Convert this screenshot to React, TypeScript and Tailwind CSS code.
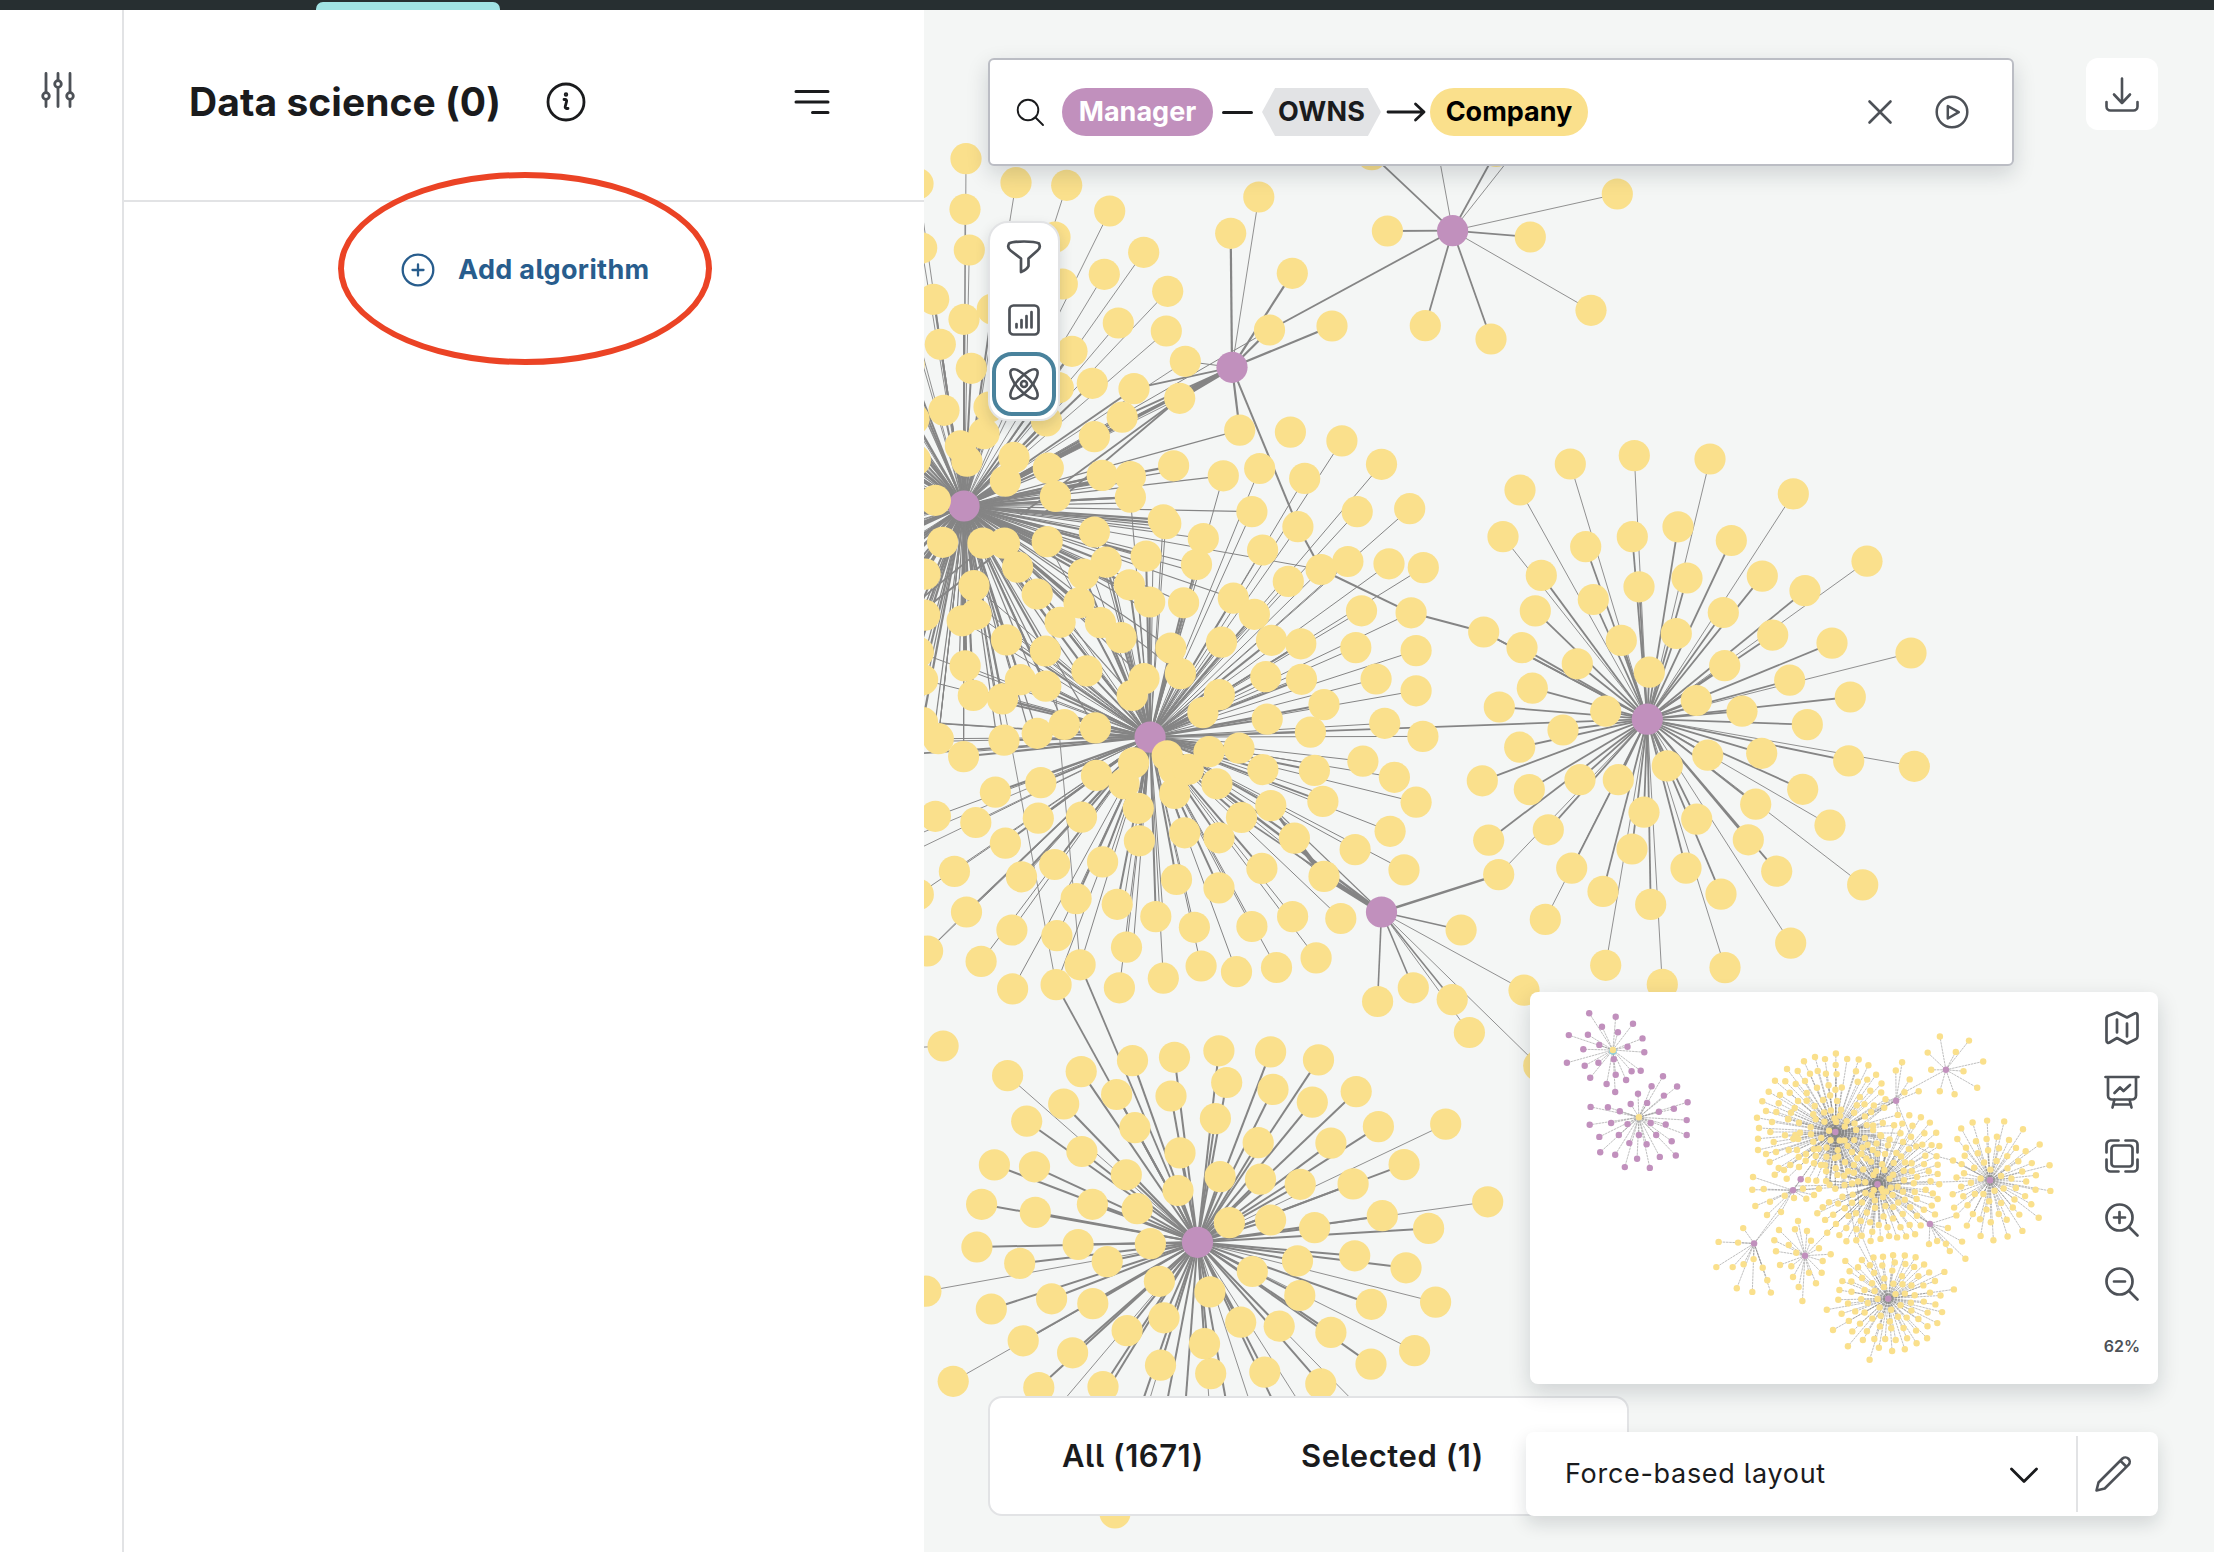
import React from "react";

type Pt = [number, number];
type Patch = { x: number; y: number; sx: number; sy: number; pts: number[] };

const NODE = "#fae08c";
const HUB = "#c190bd";

/* Minimap projection: world -> page pixels. */
const MINI = { k: 0.2262, wx: 1150, wy: 737, mx: 1877.5, my: 1184.3 };

/* Turns a flat list of patch units into points. */
function unpack(p: Patch): Pt[] {
  const out: Pt[] = [];
  for (let i = 0; i < p.pts.length; i += 2) {
    out.push([p.x + p.pts[i] / p.sx, p.y + p.pts[i + 1] / p.sy]);
  }
  return out;
}
const toWorld = ([x, y]: Pt): Pt => [
  MINI.wx + (x - MINI.mx) / MINI.k,
  MINI.wy + (y - MINI.my) / MINI.k,
];
const patchF = (pts: number[]) => unpack({ x: 1750, y: 1050, sx: 3, sy: 3, pts }).map(toWorld);
const patchE = (pts: number[]) => unpack({ x: 1500, y: 980, sx: 2.1961, sy: 2.7413, pts }).map(toWorld);
const patchA1 = (pts: number[]) => unpack({ x: 924, y: 140, sx: 3, sy: 3, pts });
const patchA = (pts: number[]) => unpack({ x: 924, y: 0, sx: 2.24, sy: 3, pts });
const patchB = (pts: number[]) => unpack({ x: 924, y: 400, sx: 2.8, sy: 2.6133, pts });
const patchC = (pts: number[]) => unpack({ x: 1440, y: 420, sx: 3, sy: 2.6133, pts });
const patchD = (pts: number[]) => unpack({ x: 924, y: 980, sx: 2.5705, sy: 2.7413, pts });

const hA = patchB([112, 277])[0];
const hB = patchB([633, 881])[0];
const hC = patchC([622, 782])[0];
const hD = patchD([703, 719])[0];
const hT1 = patchA([690, 1102])[0];
const hT2 = patchA([1184, 692])[0];
const hR = patchB([1281, 1338])[0];
const [hL1, hL2, hL4] = patchF([129, 421, 152, 388, 165, 617]);
const hL3 = patchE([558, 722])[0];
const [hP1, hP2] = patchE([248, 192, 305, 376]);

const nodesTop = [
  ...patchA1([
    126, 56, 123, 208, 136, 330, 120, 538, 142, 685, 276, 128, 428, 136, 557, 213, 393, 291, 415, 432, 205, 507,
    659, 337, 541, 403, 731, 454, 583, 549, 727, 573, 444, 634, 403, 743, 505, 730, 630, 746, 784, 664, 767, 775,
    -18, 131, -7, 324, 29, 478, 49, 613, 60, 811, 195, 801,
  ]),
  ...patchF([
    195, 21, 162, 34, 111, 57, 143, 63, 203, 63, 180, 71, 75, 92, 106, 94, 137, 102, 165, 93, 201, 113, 56, 125,
    90, 135, 119, 128, 170, 129, 37, 154, 86, 160, 144, 153, 170, 152, 48, 183, 79, 186, 123, 188, 134, 174, 21, 203,
    66, 216, 114, 207, 147, 218, 27, 234, 61, 246, 105, 256, 150, 248, 183, 253, 24, 266, 71, 276, 130, 266, 145, 267,
    24, 300, 48, 312, 78, 306, 116, 300, 141, 300, 59, 336, 168, 312, 146, 321, 115, 208, 86, 354, 74, 374, 102, 360,
    121, 345, 147, 351, 110, 386, 167, 332, 192, 340, 174, 390, 199, 392, 213, 345, 219, 150, 194, 168, 190, 193,
    197, 208, 214, 264, 190, 275, 192, 298, 206, 296, 197, 318, 182, 232, 136, 255,
  ]),
];

const nodesMid = patchB([
  343, 55, 168, 88, 477, 96, 555, 45, 102, 120, 120, 160, 252, 150, 228, 212, -24, 157, -28, 50, 348, 178, 32, 262,
  368, 252, 499, 197, 578, 200, 578, 254, 699, 172, 838, 198, 884, 79, 1026, 84, 1170, 107, 1281, 168, 940, 179,
  1066, 205, 1360, 284, 1213, 292, 918, 292, 1047, 331, 670, 313, 677, 323, 782, 362, 763, 430, 948, 392, 1112, 443,
  1187, 422, 1302, 428, 1398, 438, 1020, 474, 477, 345, 345, 370, 622, 408, 510, 424, 447, 455, 52, 372, 165, 374,
  225, 374, 262, 437, 3, 455, 140, 485, 317, 507, 575, 483, 632, 528, 727, 530, 866, 518, 925, 560, 1225, 551,
  1364, 556, 434, 530, 381, 581, 494, 582, 552, 621, 2, 562, 146, 560, 107, 577, 231, 627, 340, 656, -16, 659,
  691, 648, 833, 633, 973, 628, 1055, 637, 1209, 647, 1378, 655, 115, 695, 456, 708, 616, 728, 718, 715, 957, 723,
  1057, 730, 1266, 729, 1378, 760, -4, 731, 270, 731, 341, 748, 138, 772, 220, 781, 583, 772, 827, 770, 781, 817,
  1120, 796, -4, 843, 40, 885, 393, 848, 480, 857, 317, 871, 224, 889, 961, 834, 1082, 868, 1290, 845, 1397, 879,
  111, 932, 587, 948, 681, 930, 798, 919, 882, 910, 949, 966, 1093, 968, 1229, 944, 1317, 986, 1378, 1051, 483, 981,
  560, 1003, 700, 965, 740, 965, 702, 1028, 820, 1003, 327, 1000, 200, 1025, 32, 1088, 145, 1104, 320, 1093,
  441, 1090, 600, 1067, 603, 1152, 730, 1131, 826, 1144, 889, 1091, 971, 1060, 1117, 1049, 1305, 1127, 1207, 1175,
  1344, 1228, 1037, 1145, 1120, 1245, 228, 1158, 85, 1232, 273, 1246, 366, 1214, 500, 1207, 426, 1303, 541, 1318,
  707, 1253, 826, 1275, 946, 1224, 1167, 1355, 1032, 1350, 918, 1376, 757, 1378, 649, 1350, -16, 1292, 119, 1338,
  10, 1440, 246, 1385, 160, 1467, 372, 1400, 437, 1476, 567, 1430, 670, 1511, 776, 1479, 875, 1494, 987, 1483,
  1098, 1458, 248, 1539, 370, 1528, 547, 1536,
]);

const nodesRight = patchC([
  391, 115, 583, 93, 810, 102, 240, 183, 1060, 193, 189, 305, 437, 331, 577, 305, 714, 279, 874, 315, 1281, 369,
  967, 408, 1095, 446, 304, 406, 460, 469, 597, 436, 741, 413, 850, 503, 998, 562, 286, 499, 131, 554, 246, 595,
  412, 637, 544, 576, 709, 558, 628, 659, 854, 642, 1176, 583, 1413, 609, 1049, 680, 1231, 724, 906, 761, 769, 733,
  277, 701, 178, 750, 497, 761, 369, 810, 1102, 796, 239, 855, 127, 943, 268, 966, 420, 940, 535, 940, 682, 904,
  803, 876, 965, 871, 1226, 891, 1423, 905, 1088, 965, 1170, 1059, 947, 1004, 925, 1097, 1010, 1179, 770, 1043,
  612, 1025, 325, 1071, 146, 1098, 176, 1188, 576, 1121, 395, 1171, 316, 1305, 489, 1232, 632, 1266, 738, 1171,
  843, 1239, 1268, 1215, 1052, 1367, 855, 1431, 667, 1475, 497, 1425,
]);

const nodesBottom = [
  ...patchD([
    215, 262, 404, 251, 536, 221, 644, 212, 758, 194, 891, 197, 1014, 219, 1111, 306, 359, 340, 495, 314, 635, 318,
    778, 281, 897, 300, 998, 335, 264, 387, 542, 405, 749, 380, 859, 446, 1168, 402, 1341, 395, 1046, 447, 406, 470,
    658, 474, 181, 507, 284, 512, 520, 534, 761, 539, 865, 546, 967, 560, 1234, 506, 1103, 559, 653, 577, 148, 615,
    433, 615, 286, 637, 548, 627, 785, 665, 891, 658, 1004, 679, 1178, 646, 1449, 608, 1297, 681, 136, 732, 396, 725,
    582, 723, 246, 777, 471, 772, 960, 770, 1107, 756, 1239, 789, 844, 799, 605, 826, 735, 855, 5, 853, 173, 902,
    328, 874, 434, 887, 966, 865, 1150, 889, 1315, 883, 617, 926, 814, 938, 913, 949, 1046, 966, 522, 961, 255, 989,
    382, 1022, 721, 997, 1261, 1016, 1149, 1053, 608, 1056, 737, 1079, 876, 1075, 1020, 1107, 75, 1100, 295, 1117,
    460, 1115, 491, 1461,
  ]),
  ...patchE([938, 982, 915, 996, 889, 1012, 861, 1017, 832, 1008, 822, 984, 797, 987, 764, 1004, 846, 984, 869, 987, 894, 982]),
];

const nodesT1 = patchA([687, 700, 750, 591, 825, 820, 774, 990, 914, 978]);
const nodesT2 = [
  ...patchA([1003, 464, 1038, 693, 1358, 711, 1553, 582, 1123, 977, 1270, 1017, 1494, 931]),
  ...patchE([966, 155, 1030, 166, 1001, 197]),
];
const nodesR = [
  ...patchB([1504, 1385, 1370, 1536, 1270, 1572, 1479, 1567]),
  ...patchD([1402, 144, 1580, 235]),
  ...patchC([252, 1490]),
];
const nodesL1 = patchF([
  9, 381, 7, 419, 41, 417, 16, 468, 60, 455, 51, 495, 104, 437, 132, 444, 93, 486, 159, 416, 169, 446, 192, 435, 207, 416,
]);
const nodesL3 = patchE([
  534, 680, 480, 718, 523, 720, 475, 787, 511, 787, 535, 779, 557, 765, 577, 789, 587, 823, 520, 845, 554, 855, 595, 857,
]);
const nodesL4 = [
  ...patchF([
    144, 513, 87, 540, 135, 538, 171, 543, 73, 571, 78, 604, 116, 585, 139, 608, 183, 572, 207, 595, 218, 633, 90, 645,
    124, 649, 129, 681, 177, 668, 215, 668, 198, 700, 146, 711,
  ]),
  ...patchE([664, 880]),
  ...patchD([49, 181]),
];
const nodesFarB = patchF([218, 472, 202, 490]);

const managersP1 = patchE([
  196, 91, 254, 101, 292, 120, 224, 128, 259, 143, 313, 160, 151, 151, 193, 150, 218, 178, 280, 183, 183, 190,
  317, 198, 147, 227, 216, 227, 186, 235, 250, 217, 198, 268, 254, 260, 289, 250, 309, 249, 277, 274, 234, 285, 253, 307,
]);
const managersP2 = patchE([
  358, 264, 333, 291, 389, 292, 303, 312, 360, 317, 412, 335, 323, 337, 287, 340, 199, 348, 237, 349, 263, 360,
  349, 361, 382, 353, 410, 384, 197, 397, 244, 392, 280, 395, 331, 392, 364, 396, 218, 430, 261, 425, 305, 425,
  343, 425, 410, 425, 284, 447, 322, 450, 377, 442, 220, 472, 253, 479, 301, 490, 351, 485, 386, 481, 274, 513, 329, 515,
]);

type Edge = { a: Pt; b: Pt; w: number };
const dist = (a: Pt, b: Pt) => Math.hypot(a[0] - b[0], a[1] - b[1]);
const star = (hub: Pt, nodes: Pt[], inner: number, w: number): Edge[] =>
  nodes.map((n) => ({ a: hub, b: n, w: dist(hub, n) < inner ? w : 0.9 }));

const midEdges: Edge[] = nodesMid.flatMap((n, i) => {
  const da = dist(n, hA);
  const db = dist(n, hB);
  const out: Edge[] = [];
  if (db < da || n[1] > 760 || db < 250) {
    out.push({ a: hB, b: n, w: db < 190 ? 2 : 1 });
    if (db < 215 && i % 2 === 0) out.push({ a: hB, b: [n[0] + 7, n[1] - 5], w: 1 });
  }
  if (da < 290 && (da < db || n[1] < 760)) {
    out.push({ a: hA, b: n, w: da < 230 ? 2.2 : 1.2 });
    if (da < 240) out.push({ a: hA, b: [n[0] - 6, n[1] + 6], w: 1.2 });
  }
  return out;
});

const link = (a: Pt, b: Pt, w: number): Edge => ({ a, b, w });
const [b884, b1047, b1112, b1364, b437, b370, b40, b10, b1120, b1037, b971, b889, b838, b111] = patchB([
  884, 79, 1047, 331, 1112, 443, 1364, 556, 437, 1476, 370, 1528, 40, 885, 10, 1440, 1120, 1245, 1037, 1145, 971, 1060,
  889, 1091, 838, 198, 111, 932,
]);
const [a784, a767, a630] = patchA1([784, 664, 767, 775, 630, 746]);
const [b555, b477, b499, b578] = patchB([555, 45, 477, 96, 499, 197, 578, 254]);
const [c131, c176] = patchC([131, 554, 176, 1188]);
const [b45, b119, b240] = patchB([45, 845, 119, 1338, 240, 880]);

const links: Edge[] = [
  link(hT2, nodesT1[3], 1.8),
  link(nodesT1[3], hA, 1),
  link(hT1, b884, 2.2),
  link(hT1, b1047, 2),
  link(b1047, b1112, 2),
  link(b1112, b1364, 2),
  link(b1364, c131, 2),
  link(c131, hC, 1.7),
  link(b1112, hA, 1),
  link(hT1, hA, 3.2),
  link(hT1, a784, 1),
  link(hT1, a767, 4),
  link(hT1, a630, 1.8),
  link(hT1, b555, 2),
  link(hT1, b477, 1.2),
  link(a767, patchB([330, 300])[0], 1.8),
  link(a767, patchB([270, 300])[0], 1.8),
  link(hA, b499, 2),
  link(hA, b578, 2),
  link(hC, hB, 1.8),
  link(hR, hB, 2.4),
  link(hR, b1120, 4.5),
  link(b1120, b1037, 4.5),
  link(b1037, b971, 3),
  link(hR, b971, 1.2),
  link(hR, b889, 1.6),
  link(hR, c176, 2.4),
  link(b838, hB, 1),
  link(hD, b437, 1.8),
  link(hD, b370, 1.8),
  link(b437, patchB([370, 780])[0], 0.9),
  link(b370, b240, 0.9),
  link(hA, b240, 0.9),
  link(hA, b111, 1),
  link(hA, b40, 1),
  link(hA, b45, 1),
  link(b45, hB, 1.5),
  link(hB, hL1, 1.8),
  link(hL4, b10, 1),
  link(b10, b119, 0.9),
  link(b119, hB, 1.6),
  link(hA, hL2, 4),
  link(hA, hL1, 3),
  link(hL2, hL1, 2),
  link(hL3, hL1, 2),
  link(hL3, nodesL1[8], 2),
  link(hB, patchB([-400, 900])[0], 1),
  link(hA, patchB([-160, 700])[0], 2),
  link(patchB([185, 415])[0], patchB([-60, 590])[0], 2),
  link(patchB([135, 410])[0], patchB([-60, 560])[0], 1.6),
];

const edges: Edge[] = [
  ...star(hA, nodesTop, 230, 2),
  ...midEdges,
  ...star(hC, nodesRight, 208, 1.8),
  ...star(hD, nodesBottom, 232, 2),
  ...star(hT1, nodesT1, 150, 2.2),
  ...star(hT2, nodesT2, 124, 1.8),
  ...star(hR, nodesR, 138, 1.6),
  ...star(hL1, nodesL1, 400, 1.6),
  ...star(hL3, nodesL3, 100, 1.4),
  ...star(hL4, nodesL4, 100, 1.4),
  ...star(hB, nodesFarB, 10, 1),
  ...star(hP1, managersP1, 100, 1.2),
  ...star(hP2, managersP2, 100, 1.2),
  ...links,
];

const hubs: Pt[] = [hA, hB, hC, hD, hT1, hT2, hR, hL1, hL2, hL3, hL4];
const companies: Pt[] = [
  ...nodesTop, ...nodesMid, ...nodesRight, ...nodesBottom, ...nodesT1, ...nodesT2, ...nodesR,
  ...nodesL1, ...nodesL3, ...nodesL4, ...nodesFarB,
];

function Scene({ mini = false }: { mini?: boolean }) {
  const P = ([x, y]: Pt): Pt =>
    mini ? [MINI.mx + (x - MINI.wx) * MINI.k, MINI.my + (y - MINI.wy) * MINI.k] : [x, y];
  const r = mini ? 3.2 : 15.6;
  const dot = (p: Pt, fill: string, key: string) => {
    const [x, y] = P(p);
    return <circle key={key} cx={x.toFixed(1)} cy={y.toFixed(1)} r={r} fill={fill} />;
  };
  return (
    <>
      <g stroke="#858585">
        {edges.map((e, i) => {
          const [x1, y1] = P(e.a);
          const [x2, y2] = P(e.b);
          return (
            <line
              key={i}
              x1={x1.toFixed(1)}
              y1={y1.toFixed(1)}
              x2={x2.toFixed(1)}
              y2={y2.toFixed(1)}
              strokeWidth={mini ? 0.65 : e.w}
              strokeDasharray={mini ? "2.5 0.7" : undefined}
              opacity={mini ? 0.8 : 1}
            />
          );
        })}
      </g>
      {!mini && hubs.map((p, i) => dot(p, HUB, "h" + i))}
      {companies.map((p, i) => dot(p, NODE, "c" + i))}
      {mini && hubs.map((p, i) => dot(p, HUB, "h" + i))}
      {mini && [...managersP1, ...managersP2].map((p, i) => dot(p, HUB, "m" + i))}
      {mini && <circle cx={P(hP1)[0]} cy={P(hP1)[1] + 1} r={3.8} fill="#8fd0dd" />}
      {mini && [hP1, hP2].map((p, i) => dot(p, NODE, "p" + i))}
    </>
  );
}

function Icon({ size = 36, w = 2.2, className = "", children }: { size?: number; w?: number; className?: string; children: React.ReactNode }) {
  return (
    <svg
      width={size}
      height={size}
      viewBox={`0 0 ${size} ${size}`}
      fill="none"
      stroke="currentColor"
      strokeWidth={w}
      strokeLinecap="round"
      strokeLinejoin="round"
      className={"shrink-0 " + className}
    >
      {children}
    </svg>
  );
}

export default function App() {
  return (
    <div className="flex h-[1552px] w-[2214px] flex-col overflow-hidden bg-white font-['Inter',sans-serif] text-[#1a1b1d] [font-feature-settings:'cv05']">
      <div className="flex h-[10px] shrink-0 items-end bg-[#272f31]">
        <div className="ml-[316px] h-2 w-[184px] rounded-t-[7px] bg-[#a1e3e4]" />
      </div>

      <div className="flex min-h-0 flex-1">
        <nav className="flex w-[124px] shrink-0 flex-col border-r-2 border-[#e2e3e5] pt-[62px] pl-[40px] text-[#4d5157]">
          <Icon w={2.8}>
            <path d="M6 1.5V20M6 28.5V34.5M18 1.5V8.5M18 16.5V34.5M30 1.5V20M30 28.5V34.5" />
            <circle cx="6" cy="24" r="3.3" />
            <circle cx="18" cy="12" r="3.3" />
            <circle cx="30" cy="24" r="3.3" />
          </Icon>
        </nav>

        <aside className="relative flex w-[800px] shrink-0 flex-col">
          <header className="flex h-[192px] shrink-0 items-center border-b-2 border-[#e2e3e5] pb-[6px] pl-[65px]">
            <h1 className="w-[337px] text-[39px] leading-[48px] font-bold tracking-[0.05px] whitespace-nowrap">Data science (0)</h1>
            <Icon size={40} w={2.8} className="ml-5">
              <circle cx="20" cy="20" r="18" />
              <path d="M18 17.5h1.200a1.500 1.500 0 0 1 1.400 1.900l-1.400 5.200a1.500 1.500 0 0 0 1.400 1.900H22" />
              <circle cx="20" cy="12.500" r="0.800" fill="currentColor" />
            </Icon>
            <Icon size={36} w={3} className="ml-[208px]">
              <path d="M2 7.500H34M2 18H34M18.500 28.500H34" />
            </Icon>
          </header>
          <button className="mt-[48px] ml-[276px] flex items-center self-start text-[#285d8d]">
            <Icon size={36} w={2.300}>
              <circle cx="18" cy="18" r="15.300" />
              <path d="M12.500 18h11M18 12.500v11" />
            </Icon>
            <span className="ml-[22px] text-[27px] leading-10 font-bold tracking-[0.35px] whitespace-nowrap">Add algorithm</span>
          </button>
          <div className="absolute top-[162px] left-[214px] h-[193px] w-[374px] rounded-[50%] border-[6px] border-[#eb4325]" />
        </aside>

        <main className="relative min-w-0 flex-1 overflow-hidden bg-[#f4f6f5]">
          <svg width="1290" height="1542" viewBox="924 10 1290 1542" className="block">
            <Scene />
          </svg>

          <div className="absolute top-[48px] left-[64px] flex h-[108px] w-[1026px] items-center rounded-md border-2 border-[#bbbdc4] bg-white pl-[25px] text-[27px] font-bold shadow-[0_8px_22px_rgba(12,26,37,0.16)]">
            <Icon size={32} w={1.900}>
              <circle cx="13" cy="14" r="10.300" />
              <path d="M20.500 21.500L28 29" />
            </Icon>
            <span className="ml-[15px] flex h-12 w-[151px] items-center justify-center rounded-full bg-[#c190bd] text-white">Manager</span>
            <span className="ml-[9px] h-[3px] w-[31px] rounded-full bg-[#1a1b1d]" />
            <span className="ml-[9px] flex h-12 w-[119px] items-center justify-center bg-[#e2e3e5] tracking-[0.2px] [clip-path:polygon(11%_0,89%_0,100%_50%,89%_100%,11%_100%,0_50%)]">OWNS</span>
            <Icon size={40} w={2.800} className="ml-[5px]">
              <path d="M2 20H38M29.500 12L38 20L29.500 28" />
            </Icon>
            <span className="ml-1 flex h-12 w-[158px] items-center justify-center rounded-full bg-[#fae08c] text-black">Company</span>
            <Icon size={32} w={2.600} className="ml-[276px] text-[#4d5157]">
              <path d="M5.500 5.500L26.500 26.500M26.500 5.500L5.500 26.500" />
            </Icon>
            <Icon size={36} w={2.500} className="ml-[38px] text-[#4d5157]">
              <circle cx="18" cy="18" r="15.300" />
              <path d="M13.800 12V24.500L24.800 18.200Z" />
            </Icon>
          </div>

          <button className="absolute top-[48px] left-[1162px] flex h-[72px] w-[72px] items-center justify-center rounded-xl bg-white text-[#4d5157]">
            <Icon w={2.600}>
              <path d="M18 2.500V27M10 18.500L18 27L26 18.500M2.500 26V30.500a4 4 0 0 0 4 4H29.500a4 4 0 0 0 4-4V26" />
            </Icon>
          </button>

          <div className="absolute top-[211px] left-[64px] flex h-[200px] w-[72px] flex-col items-center rounded-[20px] border-2 border-[#e2e3e5] bg-white pt-[15px] text-[#4d5157] shadow-[0_6px_14px_rgba(12,26,37,0.14)]">
            <Icon w={2.700}>
              <path d="M3 5.500C8 2.800 28 2.800 33 5.500C34.500 8.500 33.500 11 31.500 12.500L22.500 20.500V28C21.500 31 18.500 32.500 15 34V20.500L4.500 12.500C2.500 11 1.500 8.500 3 5.500Z" />
            </Icon>
            <Icon w={2.700} className="mt-[28px]">
              <rect x="3.500" y="3.500" width="29" height="29" rx="4" />
              <path d="M10.500 22V25.500M15.500 18V25.500M20.500 14V25.500M25.500 10V25.500" />
            </Icon>
            <div className="mt-[14px] flex h-16 w-16 shrink-0 items-center justify-center rounded-[20px] border-4 border-[#49829c]">
              <Icon w={2.600}>
                <ellipse cx="18" cy="18" rx="18.800" ry="7" transform="rotate(48 18 18)" />
                <ellipse cx="18" cy="18" rx="18.800" ry="7" transform="rotate(-48 18 18)" />
                <circle cx="18" cy="18" r="3" />
              </Icon>
            </div>
          </div>

          <div className="absolute top-[1386px] left-[64px] flex h-[120px] w-[641px] items-center rounded-[14px] border-2 border-[#e2e3e5] bg-white pl-[72px] text-[31px] font-semibold tracking-[0.55px] whitespace-nowrap">
            <span className="w-[239px]">All (1671)</span>
            <span>Selected (1)</span>
          </div>

          <div className="absolute top-[982px] left-[606px] flex h-[392px] w-[628px] overflow-hidden rounded-lg bg-white shadow-[0_8px_22px_rgba(12,26,37,0.16)]">
            <svg width="556" height="392" viewBox="1530 992 556 392" className="shrink-0">
              <Scene mini />
            </svg>
            <div className="flex w-[72px] flex-col items-center pt-[18px] text-[#4d5157]">
              <Icon w={2.700}>
                <path d="M2.500 8.500a3 3 0 0 1 1.800-2.700L13 2.500L23 7.500L30.500 3.500a2 2 0 0 1 3 1.800V26.500a3 3 0 0 1-1.800 2.700L23 33.500L13 28L5.500 32.500a2 2 0 0 1-3-1.800ZM13 9.500V22.500M23 13.500V26.500" />
              </Icon>
              <Icon w={2.700} className="mt-[28px]">
                <path d="M1.500 3H34.500M4 3V21.500a4 4 0 0 0 4 4H28a4 4 0 0 0 4-4V3M10.500 25.500L8.500 33.500M25.500 25.500L27.500 33.500M10 30.500H26M10.500 19L16 13.500L19.500 17L26 11" />
              </Icon>
              <Icon w={2.700} className="mt-[28px]">
                <rect x="7.500" y="7.500" width="21" height="21" rx="3" />
                <path d="M14.500 2.500H6.500a4 4 0 0 0-4 4V14.500M21.500 2.500H29.500a4 4 0 0 1 4 4V14.500M14.500 33.500H6.500a4 4 0 0 1-4-4V21.500M21.500 33.500H29.500a4 4 0 0 0 4-4V21.500" />
              </Icon>
              <Icon w={2.700} className="mt-[28px]">
                <circle cx="15.500" cy="15.500" r="13" />
                <path d="M25 25L33.500 33.500M10 15.500H21M15.500 10V21" />
              </Icon>
              <Icon w={2.700} className="mt-[28px]">
                <circle cx="15.500" cy="15.500" r="13" />
                <path d="M25 25L33.500 33.500M10 15.500H21" />
              </Icon>
              <span className="mt-[32px] text-[16px] leading-6 font-semibold">62%</span>
            </div>
          </div>

          <div className="absolute top-[1422px] left-[602px] flex h-[84px] w-[632px] items-center rounded-lg bg-white shadow-[0_8px_18px_rgba(12,26,37,0.14)]">
            <span className="ml-[39px] w-[442px] text-[27px] tracking-[0.7px] whitespace-nowrap">Force-based layout</span>
            <Icon size={32} w={2.800} className="ml-px">
              <path d="M3.500 11L16 23.500L28.500 11" />
            </Icon>
            <span className="ml-[36px] h-[76px] w-[2px] bg-[#e2e3e5]" />
            <Icon size={40} w={2.600} className="ml-[15px] text-[#4d5157]">
              <path d="M3.500 36.500L5.500 28.500L29.500 4.500a4.400 4.400 0 0 1 6.200 6.200L11.700 34.500ZM27.500 6.800L33.200 12.500" />
            </Icon>
          </div>
        </main>
      </div>
    </div>
  );
}
